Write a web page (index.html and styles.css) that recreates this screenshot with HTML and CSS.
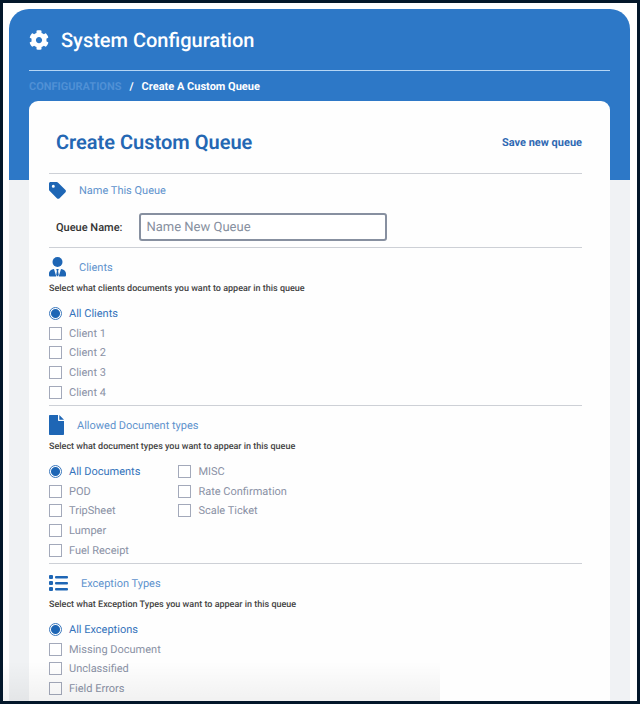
FILE: index.html
```html
<!DOCTYPE html>
<html lang="en">
<head>
    <meta charset="UTF-8">
    <meta name="viewport" content="width=device-width, initial-scale=1.0">
    <title>System Configuration</title>
    <link rel="stylesheet" href="styles.css">
</head>
<body>
    <div class="frame">
        <div class="app">
            <header class="app-header">
                <svg class="gear" viewBox="0 0 512 512" width="20" height="20" aria-hidden="true">
                    <path fill="currentColor" d="M487.400 315.700l-42.600-24.600c4.300-23.200 4.300-47 0-70.200l42.600-24.600c4.900-2.800 7.100-8.600 5.500-14-11.100-35.600-30-67.800-54.700-94.600-3.800-4.100-10-5.100-14.800-2.300L380.800 110c-17.900-15.400-38.500-27.300-60.800-35.100V25.800c0-5.600-3.900-10.500-9.400-11.700-36.700-8.200-74.300-7.800-109.200 0-5.500 1.200-9.400 6.100-9.400 11.700V75c-22.200 7.900-42.800 19.800-60.800 35.100L88.700 85.500c-4.900-2.800-11-1.900-14.800 2.300-24.700 26.700-43.600 58.900-54.700 94.600-1.700 5.400.6 11.200 5.500 14L67.300 221c-4.300 23.200-4.300 47 0 70.200l-42.600 24.600c-4.900 2.800-7.100 8.600-5.500 14 11.100 35.600 30 67.800 54.700 94.600 3.800 4.100 10 5.100 14.800 2.300l42.600-24.600c17.900 15.400 38.500 27.300 60.800 35.100v49.200c0 5.600 3.900 10.500 9.400 11.700 36.700 8.200 74.300 7.800 109.200 0 5.500-1.200 9.400-6.100 9.400-11.700v-49.200c22.200-7.900 42.800-19.800 60.800-35.100l42.600 24.600c4.900 2.800 11 1.900 14.800-2.300 24.700-26.700 43.600-58.900 54.700-94.600 1.500-5.500-.7-11.300-5.600-14.100zM256 336c-44.100 0-80-35.900-80-80s35.900-80 80-80 80 35.900 80 80-35.900 80-80 80z"/>
                </svg>
                <h1>System Configuration</h1>
            </header>

            <nav class="breadcrumb" aria-label="Breadcrumb">
                <a href="#">CONFIGURATIONS</a>
                <span>/</span>
                <span>Create A Custom Queue</span>
            </nav>

            <main class="card">
                <div class="card-header">
                    <h2>Create Custom Queue</h2>
                    <button type="button" class="btn-save">Save new queue</button>
                </div>

                <section class="section section-name">
                    <h3 class="section-title">
                        <svg viewBox="0 0 17 17" width="17" height="17" aria-hidden="true">
                            <path fill="currentColor" fill-rule="evenodd" d="M0 1.600V7.500c0 .5.200.9.500 1.200l7.600 7.700c.6.600 1.600.6 2.200 0l6.200-6.200c.6-.6.600-1.600 0-2.200L8.900.5C8.600.200 8.200 0 7.700 0H1.600C.7 0 0 .7 0 1.600zM4.300 2.800a1.500 1.500 0 1 1 0 3 1.500 1.500 0 0 1 0-3z"/>
                        </svg>
                        Name This Queue
                    </h3>
                    <div class="field">
                        <label for="queueName">Queue Name:</label>
                        <input type="text" id="queueName" placeholder="Name New Queue">
                    </div>
                </section>

                <section class="section">
                    <h3 class="section-title">
                        <svg viewBox="0 0 17 20" width="17" height="20" aria-hidden="true">
                            <circle fill="currentColor" cx="8.500" cy="5" r="5"/>
                            <path fill="currentColor" d="M5 12l2.300 7.500H1.300C.6 19.500 0 19 0 18.200v-1.400C0 14.200 2.200 12.100 5 12zM12 12l-2.300 7.500h6c.7 0 1.300-.5 1.300-1.300v-1.400c0-2.600-2.200-4.700-5-4.800zM7.200 12h2.600l-.7 2 .7 4-1.300 1.500L7.200 18l.7-4z"/>
                        </svg>
                        Clients
                    </h3>
                    <p class="hint">Select what clients documents you want to appear in this queue</p>
                    <div class="options">
                        <label class="option"><input type="radio" name="clients" checked><span>All Clients</span></label>
                        <label class="option"><input type="checkbox"><span>Client 1</span></label>
                        <label class="option"><input type="checkbox"><span>Client 2</span></label>
                        <label class="option"><input type="checkbox"><span>Client 3</span></label>
                        <label class="option"><input type="checkbox"><span>Client 4</span></label>
                    </div>
                </section>

                <section class="section">
                    <h3 class="section-title">
                        <svg viewBox="0 0 15 20" width="15" height="20" aria-hidden="true">
                            <path fill="currentColor" d="M9 0H1C.4 0 0 .4 0 1v18c0 .6.400 1 1 1h13c.6 0 1-.4 1-1V6h-5c-.6 0-1-.4-1-1zM10.300 0v4.700H15z"/>
                        </svg>
                        Allowed Document types
                    </h3>
                    <p class="hint">Select what document types you want to appear in this queue</p>
                    <div class="options">
                        <label class="option"><input type="radio" name="documents" checked><span>All Documents</span></label>
                        <label class="option"><input type="checkbox"><span>POD</span></label>
                        <label class="option"><input type="checkbox"><span>TripSheet</span></label>
                        <label class="option"><input type="checkbox"><span>Lumper</span></label>
                        <label class="option"><input type="checkbox"><span>Fuel Receipt</span></label>
                        <label class="option"><input type="checkbox"><span>MISC</span></label>
                        <label class="option"><input type="checkbox"><span>Rate Confirmation</span></label>
                        <label class="option"><input type="checkbox"><span>Scale Ticket</span></label>
                    </div>
                </section>

                <section class="section">
                    <h3 class="section-title">
                        <svg viewBox="0 0 19 16" width="19" height="16" aria-hidden="true">
                            <g fill="currentColor">
                                <rect x="0" y="0" width="4" height="4" rx="1"/>
                                <rect x="0" y="6" width="4" height="4" rx="1"/>
                                <rect x="0" y="12" width="4" height="4" rx="1"/>
                                <rect x="6" y="1" width="13" height="2.500" rx="1"/>
                                <rect x="6" y="7" width="13" height="2.500" rx="1"/>
                                <rect x="6" y="13" width="13" height="2.500" rx="1"/>
                            </g>
                        </svg>
                        Exception Types
                    </h3>
                    <p class="hint">Select what Exception Types you want to appear in this queue</p>
                    <div class="options options-short">
                        <label class="option"><input type="radio" name="exceptions" checked><span>All Exceptions</span></label>
                        <label class="option"><input type="checkbox"><span>Missing Document</span></label>
                        <label class="option"><input type="checkbox"><span>Unclassified</span></label>
                        <label class="option"><input type="checkbox"><span>Field Errors</span></label>
                    </div>
                </section>
            </main>
        </div>
        <div class="bottom-fade"></div>
    </div>
</body>
</html>
```
FILE: styles.css
```css
* {
    margin: 0;
    padding: 0;
    box-sizing: border-box;
}

body {
    font-family: Roboto, 'Liberation Sans', sans-serif;
    text-rendering: geometricPrecision;
    background: #fff;
}

.frame {
    position: relative;
    height: 100vh;
    padding: 6px 7px 0 6px;
    border: 3px solid #03172a;
    overflow: hidden;
}

.app {
    min-height: 100%;
    padding: 0 20px;
    border-radius: 20px 20px 0 0;
    background: linear-gradient(#2d78c7 171px, #f0f2f4 171px);
}

.app-header {
    display: flex;
    align-items: center;
    gap: 12px;
    height: 62px;
    color: #fff;
    border-bottom: 1px solid #b5d6f5;
}

.app-header h1 {
    font-size: 20px;
    font-weight: 500;
}

.breadcrumb {
    display: flex;
    align-items: center;
    gap: 8px;
    height: 30px;
    font-size: 11px;
    font-weight: 700;
    color: #fff;
}

.breadcrumb a {
    color: #5090d5;
    text-decoration: none;
}

.card {
    padding: 0 28px 20px 20px;
    border-radius: 9px 9px 0 0;
    background: #fefefe;
}

.card-header {
    display: flex;
    align-items: center;
    justify-content: space-between;
    height: 73px;
    padding: 10px 0 0 7px;
    border-bottom: 1px solid #cdd0d6;
}

.card-header h2 {
    font-size: 20px;
    font-weight: 600;
    color: #2467b3;
}

.btn-save {
    border: none;
    background: none;
    font-family: inherit;
    font-size: 11px;
    font-weight: 700;
    text-rendering: inherit;
    color: #2f69b3;
    cursor: pointer;
}

.section {
    padding: 8px 0 3px;
    border-bottom: 1px solid #cdd0d6;
}

.section-name {
    padding: 5px 0 6px;
}

.section-title {
    display: flex;
    align-items: center;
    gap: 13px;
    height: 22px;
    font-size: 11px;
    font-weight: 400;
    color: #5f93cd;
}

.section-title svg {
    color: #1e66b5;
}

.field {
    display: flex;
    align-items: center;
    gap: 17px;
    margin-top: 12px;
    padding-left: 7px;
}

.field label {
    font-size: 11px;
    font-weight: 500;
    color: #333;
}

.field input {
    width: 47%;
    height: 28px;
    padding: 0 5px;
    border: 2px solid #8790a0;
    border-radius: 3px;
    background: #fff;
    font-family: inherit;
    font-size: 13px;
    text-rendering: inherit;
}

.field input::placeholder {
    color: #8790a0;
}

.hint {
    margin: 4px 0 7px;
    font-size: 9px;
    font-weight: 500;
    line-height: 15px;
    color: #444;
}

.options {
    display: grid;
    grid-auto-flow: column;
    grid-template-rows: repeat(5, 1fr);
    grid-auto-columns: max-content;
    column-gap: 38px;
    height: 98px;
}

.options-short {
    grid-template-rows: repeat(4, 1fr);
    height: 78px;
}

.option {
    display: flex;
    align-items: center;
    gap: 7px;
    font-size: 11px;
    color: #8a91a5;
}

.option input {
    appearance: none;
    width: 13px;
    height: 13px;
    border: 1px solid #a3a9ba;
    background: #fff;
}

.option input[type="radio"] {
    border-color: #3c78bd;
    border-radius: 50%;
}

.option input[type="radio"]:checked {
    background: radial-gradient(circle, #1e66b5 4px, #fff 5px);
}

.option input[type="checkbox"]:checked {
    background: #1e66b5;
}

.option input:checked + span {
    color: #3473bb;
}

/* soft shade along the bottom left of the window */
.bottom-fade {
    position: absolute;
    left: 0;
    bottom: 0;
    width: 69%;
    height: 40px;
    background: linear-gradient(rgba(0, 0, 0, 0), rgba(0, 0, 0, 0.05));
    pointer-events: none;
}
```
